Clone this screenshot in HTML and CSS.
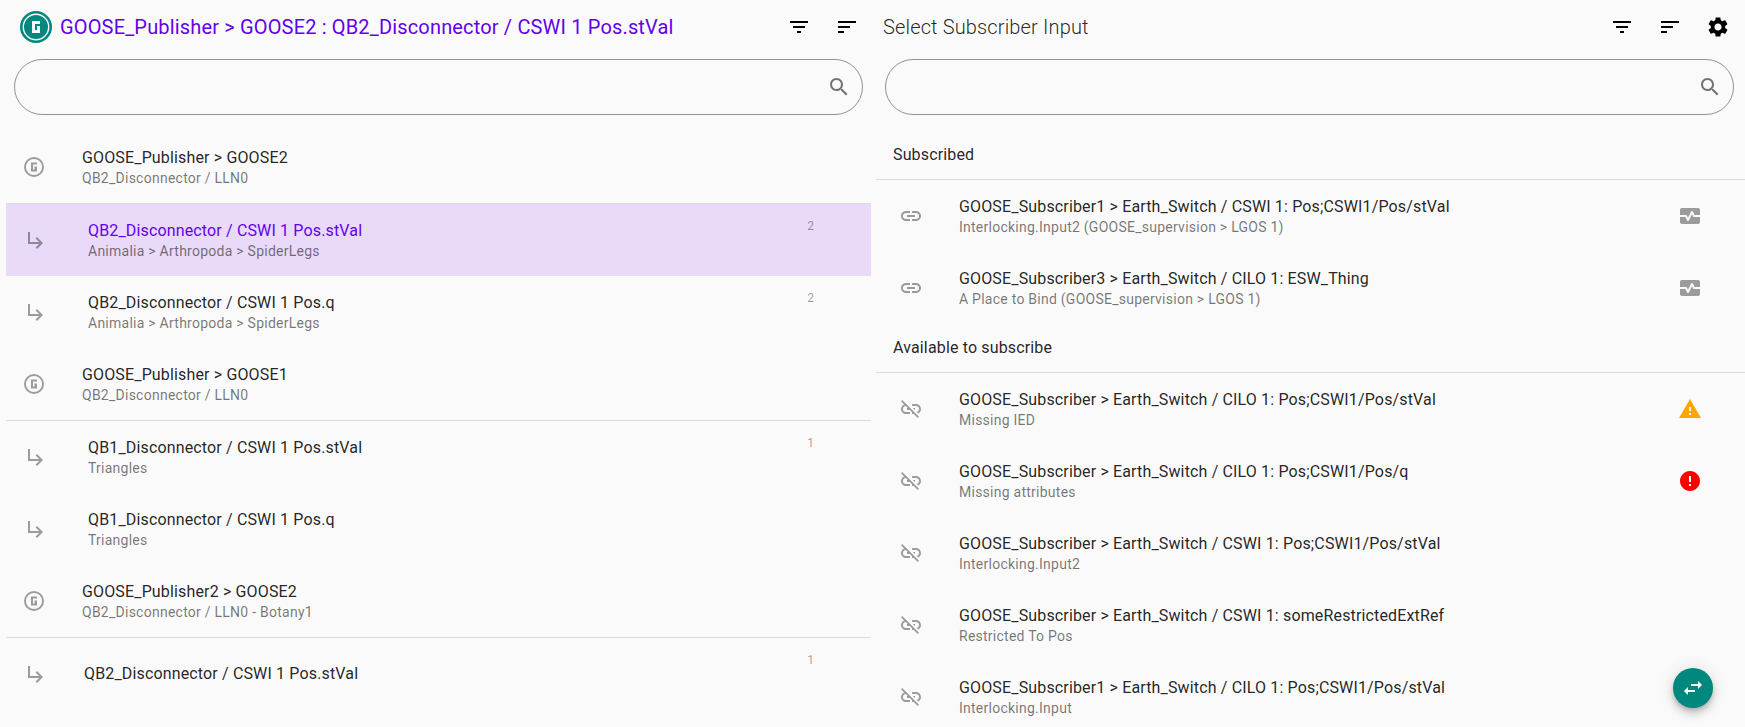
FILE: index.html
```html
<!doctype html>
<html>
 <head>
	<meta charset="UTF-8">
	<title>Subscriber Later Binding</title>
	<link rel="stylesheet" href="styles.css">
 </head>
 <body>
	<svg class="defs" width="0" height="0">
		<symbol id="i-filter" viewBox="0 0 24 24"><path d="M10 18h4v-2h-4v2zM3 6v2h18V6H3zm3 7h12v-2H6v2z"/></symbol>
		<symbol id="i-sort" viewBox="0 0 24 24"><path d="M3 18h6v-2H3v2zM3 6v2h18V6H3zm0 7h12v-2H3v2z"/></symbol>
		<symbol id="i-gear" viewBox="0 0 24 24"><path d="M19.14 12.94c.04-.3.06-.61.06-.94 0-.32-.02-.64-.07-.94l2.03-1.58c.18-.14.23-.41.12-.61l-1.92-3.32c-.12-.22-.37-.29-.59-.22l-2.39.96c-.5-.38-1.03-.7-1.62-.94l-.36-2.54c-.04-.24-.24-.41-.48-.41h-3.84c-.24 0-.43.17-.47.41l-.36 2.54c-.59.24-1.13.57-1.62.94l-2.39-.96c-.22-.08-.47 0-.59.22L2.74 8.87c-.12.21-.08.47.12.61l2.03 1.58c-.05.3-.09.63-.09.94s.02.64.07.94l-2.03 1.58c-.18.14-.23.41-.12.61l1.92 3.32c.12.22.37.29.59.22l2.39-.96c.5.38 1.03.7 1.62.94l.36 2.54c.05.24.24.41.48.41h3.84c.24 0 .44-.17.47-.41l.36-2.54c.59-.24 1.13-.56 1.62-.94l2.39.96c.22.08.47 0 .59-.22l1.92-3.32c.12-.22.07-.47-.12-.61l-2.01-1.58zM12 15.6c-1.98 0-3.6-1.62-3.6-3.6s1.62-3.6 3.6-3.6 3.6 1.62 3.6 3.6-1.62 3.6-3.6 3.6z"/></symbol>
		<symbol id="i-search" viewBox="0 0 24 24"><path d="M15.5 14h-.79l-.28-.27C15.41 12.59 16 11.11 16 9.5 16 5.91 13.09 3 9.5 3S3 5.91 3 9.5 5.91 16 9.5 16c1.61 0 3.09-.59 4.23-1.57l.27.28v.79l5 4.99L20.49 19l-4.99-5zm-6 0C7.01 14 5 11.99 5 9.5S7.01 5 9.5 5 14 7.01 14 9.5 11.99 14 9.5 14z"/></symbol>
		<symbol id="i-arrow" viewBox="0 0 24 24"><path d="M19 15l-6 6-1.42-1.42L15.17 16H4V4h2v10h9.17l-3.59-3.58L13 9l6 6z"/></symbol>
		<symbol id="i-link" viewBox="0 0 24 24"><path d="M3.9 12c0-1.71 1.39-3.1 3.1-3.1h4V7H7c-2.76 0-5 2.24-5 5s2.24 5 5 5h4v-1.9H7c-1.71 0-3.1-1.39-3.1-3.1zM8 13h8v-2H8v2zm9-6h-4v1.9h4c1.71 0 3.1 1.39 3.1 3.1s-1.39 3.1-3.1 3.1h-4V17h4c2.76 0 5-2.24 5-5s-2.24-5-5-5z"/></symbol>
		<symbol id="i-unlink" viewBox="0 0 24 24"><path d="M17 7h-4v1.9h4c1.71 0 3.1 1.39 3.1 3.1 0 1.43-.98 2.63-2.31 2.98l1.46 1.46C20.88 15.61 22 13.95 22 12c0-2.76-2.24-5-5-5zm-1 4h-2.19l2 2H16zM2 4.27l3.11 3.11C3.29 8.12 2 9.91 2 12c0 2.76 2.24 5 5 5h4v-1.9H7c-1.71 0-3.1-1.39-3.1-3.1 0-1.59 1.21-2.9 2.76-3.07L8.73 11H8v2h2.73L13 15.27V17h1.73l4.01 4L20 19.74 3.27 3 2 4.27z"/></symbol>
		<symbol id="i-heart" viewBox="0 0 24 24"><path d="M15.11 12.45L14 10.24l-3.11 6.21C10.72 16.79 10.38 17 10 17s-.72-.21-.89-.55L7.38 13H2v5c0 1.1.9 2 2 2h16c1.1 0 2-.9 2-2v-5h-6c-.38 0-.72-.21-.89-.55z"/><path d="M20 4H4C2.9 4 2 4.9 2 6v5h6c.38 0 .72.21.89.55L10 13.76l3.11-6.21c.34-.68 1.45-.68 1.79 0L16.62 11H22V6c0-1.1-.9-2-2-2z"/></symbol>
		<symbol id="i-warning" viewBox="0 0 24 24"><path d="M1 21h22L12 2 1 21zm12-3h-2v-2h2v2zm0-4h-2v-4h2v4z"/></symbol>
		<symbol id="i-error" viewBox="0 0 24 24"><path d="M12 2C6.48 2 2 6.48 2 12s4.48 10 10 10 10-4.48 10-10S17.52 2 12 2zm1 15h-2v-2h2v2zm0-4h-2V7h2v6z"/></symbol>
		<symbol id="i-swap" viewBox="0 0 24 24"><path d="M6.99 11L3 15l3.99 4v-3H14v-2H6.99v-3zM21 9l-3.99-4v3H10v2h7.01v3L21 9z"/></symbol>
		<symbol id="i-goose" viewBox="0 0 24 24"><path fill-rule="evenodd" d="M12 2a10 10 0 1 0 0 20 10 10 0 0 0 0-20zm0 1.9a8.1 8.1 0 1 1 0 16.2 8.1 8.1 0 0 1 0-16.2z"/><path d="M9 7.5h6v2h-4v5h1.5v-3H15v5H9z"/></symbol>
		<symbol id="i-logo" viewBox="0 0 32 32"><path fill-rule="evenodd" d="M16 0a16 16 0 1 0 0 32 16 16 0 0 0 0-32zm0 2.6a13.4 13.4 0 1 1 0 26.8 13.4 13.4 0 0 1 0-26.8z"/><path fill-rule="evenodd" d="M16 4a12 12 0 1 0 0 24 12 12 0 0 0 0-24zM12 10h8v3h-5v6h2v-4h3v7h-8z"/></symbol>
	</svg>

	<div class="page">
		<section class="col">
			<header class="bar">
				<svg class="logo"><use href="#i-logo"/></svg>
				<h1 class="title sel">GOOSE_Publisher &gt; GOOSE2 : QB2_Disconnector / CSWI 1 Pos.stVal</h1>
				<svg class="act"><use href="#i-filter"/></svg>
				<svg class="act"><use href="#i-sort"/></svg>
			</header>
			<div class="search"><svg class="ico"><use href="#i-search"/></svg></div>
			<ul class="list">
				<li class="row head">
					<svg class="ico"><use href="#i-goose"/></svg>
					<div class="txt"><b>GOOSE_Publisher &gt; GOOSE2</b><i>QB2_Disconnector / LLN0</i></div>
				</li>
				<li class="sep"></li>
				<li class="row fcda on">
					<svg class="ico"><use href="#i-arrow"/></svg>
					<div class="txt"><b>QB2_Disconnector / CSWI 1 Pos.stVal</b><i>Animalia &gt; Arthropoda &gt; SpiderLegs</i></div>
					<span class="num">2</span>
				</li>
				<li class="row fcda">
					<svg class="ico"><use href="#i-arrow"/></svg>
					<div class="txt"><b>QB2_Disconnector / CSWI 1 Pos.q</b><i>Animalia &gt; Arthropoda &gt; SpiderLegs</i></div>
					<span class="num">2</span>
				</li>
				<li class="row head">
					<svg class="ico"><use href="#i-goose"/></svg>
					<div class="txt"><b>GOOSE_Publisher &gt; GOOSE1</b><i>QB2_Disconnector / LLN0</i></div>
				</li>
				<li class="sep"></li>
				<li class="row fcda">
					<svg class="ico"><use href="#i-arrow"/></svg>
					<div class="txt"><b>QB1_Disconnector / CSWI 1 Pos.stVal</b><i>Triangles</i></div>
					<span class="num">1</span>
				</li>
				<li class="row fcda">
					<svg class="ico"><use href="#i-arrow"/></svg>
					<div class="txt"><b>QB1_Disconnector / CSWI 1 Pos.q</b><i>Triangles</i></div>
				</li>
				<li class="row head">
					<svg class="ico"><use href="#i-goose"/></svg>
					<div class="txt"><b>GOOSE_Publisher2 &gt; GOOSE2</b><i>QB2_Disconnector / LLN0 - Botany1</i></div>
				</li>
				<li class="sep"></li>
				<li class="row fcda single">
					<svg class="ico"><use href="#i-arrow"/></svg>
					<div class="txt"><b>QB2_Disconnector / CSWI 1 Pos.stVal</b></div>
					<span class="num">1</span>
				</li>
			</ul>
		</section>

		<section class="col right">
			<header class="bar">
				<h1 class="title">Select Subscriber Input</h1>
				<svg class="act"><use href="#i-filter"/></svg>
				<svg class="act"><use href="#i-sort"/></svg>
				<svg class="act"><use href="#i-gear"/></svg>
			</header>
			<div class="search"><svg class="ico"><use href="#i-search"/></svg></div>
			<ul class="list">
				<li class="group">Subscribed</li>
				<li class="sep"></li>
				<li class="row ext">
					<svg class="ico"><use href="#i-link"/></svg>
					<div class="txt"><b>GOOSE_Subscriber1 &gt; Earth_Switch / CSWI 1: Pos;CSWI1/Pos/stVal</b><i>Interlocking.Input2 (GOOSE_supervision &gt; LGOS 1)</i></div>
					<svg class="ico end"><use href="#i-heart"/></svg>
				</li>
				<li class="row ext">
					<svg class="ico"><use href="#i-link"/></svg>
					<div class="txt"><b>GOOSE_Subscriber3 &gt; Earth_Switch / CILO 1: ESW_Thing</b><i>A Place to Bind (GOOSE_supervision &gt; LGOS 1)</i></div>
					<svg class="ico end"><use href="#i-heart"/></svg>
				</li>
				<li class="group">Available to subscribe</li>
				<li class="sep"></li>
				<li class="row ext">
					<svg class="ico"><use href="#i-unlink"/></svg>
					<div class="txt"><b>GOOSE_Subscriber &gt; Earth_Switch / CILO 1: Pos;CSWI1/Pos/stVal</b><i>Missing IED</i></div>
					<svg class="ico end warn"><use href="#i-warning"/></svg>
				</li>
				<li class="row ext">
					<svg class="ico"><use href="#i-unlink"/></svg>
					<div class="txt"><b>GOOSE_Subscriber &gt; Earth_Switch / CILO 1: Pos;CSWI1/Pos/q</b><i>Missing attributes</i></div>
					<svg class="ico end err"><use href="#i-error"/></svg>
				</li>
				<li class="row ext">
					<svg class="ico"><use href="#i-unlink"/></svg>
					<div class="txt"><b>GOOSE_Subscriber &gt; Earth_Switch / CSWI 1: Pos;CSWI1/Pos/stVal</b><i>Interlocking.Input2</i></div>
				</li>
				<li class="row ext">
					<svg class="ico"><use href="#i-unlink"/></svg>
					<div class="txt"><b>GOOSE_Subscriber &gt; Earth_Switch / CSWI 1: someRestrictedExtRef</b><i>Restricted To Pos</i></div>
				</li>
				<li class="row ext">
					<svg class="ico"><use href="#i-unlink"/></svg>
					<div class="txt"><b>GOOSE_Subscriber1 &gt; Earth_Switch / CILO 1: Pos;CSWI1/Pos/stVal</b><i>Interlocking.Input</i></div>
				</li>
			</ul>
		</section>
	</div>

	<div class="fab"><svg><use href="#i-swap"/></svg></div>
 </body>
</html>
```
FILE: styles.css
```css
html,body{margin:0;height:100%;overflow:hidden}
body{background:#fafafa;color:rgba(0,0,0,.87);font-family:Roboto,"Liberation Sans",sans-serif}
.defs{position:absolute}
.page{display:flex;height:727px;overflow:hidden}

/* 左右两栏 */
.col{width:865px;margin-left:6px;flex:none}
.col.right{width:869px;margin-left:5px;flex:1}

.bar{display:flex;align-items:center;height:54px;gap:24px;padding-right:12px}
.logo{width:32px;height:32px;fill:#00887f;margin:0 -16px 0 14px}
.title{flex:1;margin:0;font-size:20px;font-weight:300;letter-spacing:.15px;white-space:nowrap}
.title.sel{color:#6200ee;font-weight:400;letter-spacing:.16px}
.act{width:24px;height:24px;fill:#000}
.right .bar{padding-left:7px;padding-right:15px}

.search{display:flex;align-items:center;justify-content:flex-end;box-sizing:border-box;height:56px;margin:5px 8px 0;padding-right:11px;border:1px solid rgba(0,0,0,.42);border-radius:28px}
.search .ico{fill:rgba(0,0,0,.54)}
.right .search{margin:5px 11px 0 9px}

.ico{flex:none;width:24px;height:24px;fill:rgba(0,0,0,.38)}
.list{list-style:none;margin:16px 0 0;padding:0}
.sep{height:1px;background:rgba(0,0,0,.12)}

.row{position:relative;display:flex;align-items:center;height:72px;padding-left:16px}
.row .txt{display:flex;flex-direction:column;margin-left:36px;padding-top:2px}
.fcda .ico{margin-left:2px}
.fcda .txt{margin-left:40px}
.fcda.single .txt{margin-left:36px;padding-top:0}
.txt b{font-weight:400;font-size:16px;letter-spacing:.15px;line-height:20px}
.txt i{font-style:normal;font-size:14px;letter-spacing:.25px;line-height:20px;color:rgba(0,0,0,.54)}
.num{position:absolute;top:15px;right:57px;font-size:12px;color:rgba(0,0,0,.38)}

.on{background:#e8daf8}
.on b{color:#6200ee}

.group{display:flex;align-items:center;box-sizing:border-box;height:48px;padding:0 0 2px 17px;font-size:16px;letter-spacing:.15px}
.ext{padding-left:23px}
.ext .txt{margin-left:36px;flex:1}
.ext .end{margin-right:43px}
.warn{fill:#ffa500}
.err{fill:#f00}

.fab{position:fixed;left:1673px;top:668px;display:flex;align-items:center;justify-content:center;width:40px;height:40px;border-radius:50%;background:#00887f;box-shadow:0 3px 5px -1px rgba(0,0,0,.2),0 6px 10px 0 rgba(0,0,0,.14),0 1px 18px 0 rgba(0,0,0,.12)}
.fab svg{width:24px;height:24px;fill:#fff}
```
